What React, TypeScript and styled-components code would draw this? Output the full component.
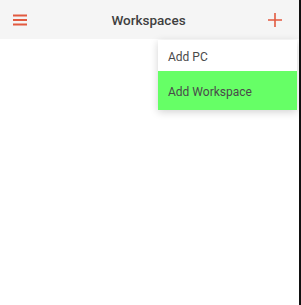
import styled, { createGlobalStyle } from "styled-components";

const GlobalStyle = createGlobalStyle`
  html, body {
    margin: 0;
    padding: 0;
    background: #ffffff;
    font-family: Roboto, "Liberation Sans", sans-serif;
  }
`;

const ACCENT = "#e25a40";

const menuItems = [
  { label: "Add PC", active: false },
  { label: "Add Workspace", active: true },
];

export default function App() {
  return (
    <>
      <GlobalStyle />
      <Screen>
        <Header>
          <IconButton aria-label="menu">
            <svg width="14" height="12" viewBox="0 0 14 12">
              <rect x="0" y="0.5" width="14" height="2" fill={ACCENT} />
              <rect x="0" y="5" width="14" height="2" fill={ACCENT} />
              <rect x="0" y="9.5" width="14" height="2" fill={ACCENT} />
            </svg>
          </IconButton>
          <Title>Workspaces</Title>
          <IconButton aria-label="add">
            <svg width="14" height="14" viewBox="0 0 14 14">
              <path d="M7 0v14M0 7h14" stroke={ACCENT} strokeWidth="1.6" />
            </svg>
          </IconButton>
        </Header>
        <Body />
        <Menu>
          {menuItems.map((item) => (
            <MenuItem key={item.label} active={item.active}>
              {item.label}
            </MenuItem>
          ))}
        </Menu>
      </Screen>
    </>
  );
}

const Screen = styled.div`
  position: relative;
  width: 299px;
  height: 305px;
  border-right: 2px solid #111;
  background: #fff;
  display: flex;
  flex-direction: column;
`;

const Header = styled.header`
  height: 39px;
  flex-shrink: 0;
  background: #f5f5f5;
  box-shadow: 0 1px 2px rgba(0, 0, 0, 0.06);
  display: flex;
  align-items: center;
  justify-content: space-between;
  padding: 1px 17px 0 13px;
  box-sizing: border-box;
`;

const IconButton = styled.div`
  display: flex;
  align-items: center;
  justify-content: center;
  height: 20px;
`;

const Title = styled.div`
  font-size: 13.5px;
  font-weight: 500;
  color: #3f3f3f;
  padding-left: 2px;
`;

const Body = styled.div`
  flex: 1;
  background: #fff;
`;

const Menu = styled.div`
  position: absolute;
  top: 40px;
  right: 2px;
  width: 139px;
  background: #fff;
  box-shadow: 0 2px 8px rgba(0, 0, 0, 0.18);
  display: flex;
  flex-direction: column;
`;

const MenuItem = styled.div<{ active: boolean }>`
  height: ${(p) => (p.active ? "39px" : "31px")};
  display: flex;
  align-items: center;
  padding-left: 10px;
  padding-top: ${(p) => (p.active ? "3px" : "2px")};
  box-sizing: border-box;
  font-size: 12px;
  color: #4a4a4a;
  background: ${(p) => (p.active ? "#66ff66" : "#fff")};
`;
